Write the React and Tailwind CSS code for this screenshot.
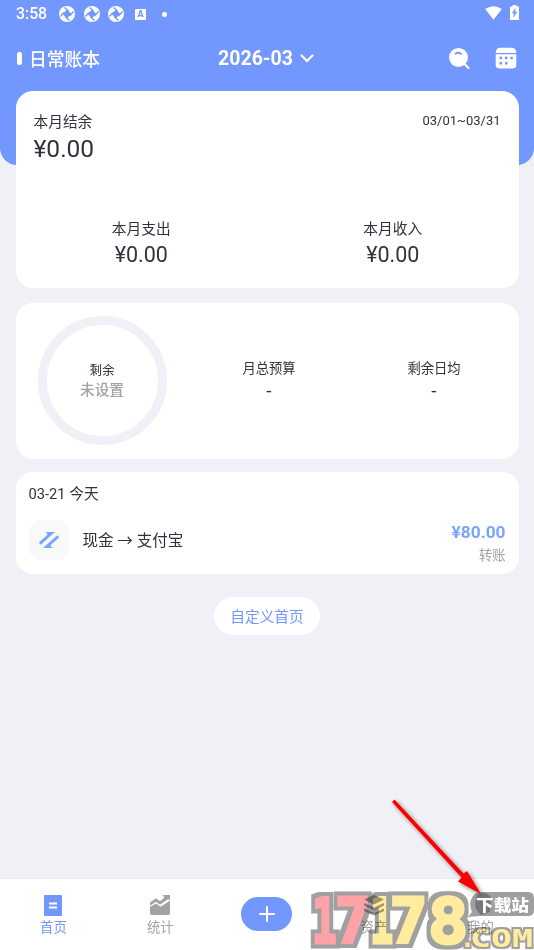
import React from "react";

function Shutter() {
  return (
    <svg width="16" height="16" viewBox="0 0 16 16">
      <circle cx="8" cy="8" r="8" fill="#fff" />
      <path d="M8 4.200 11.800 8 8 11.800 4.200 8z" fill="#7298ff" stroke="#7298ff" strokeWidth="1" strokeLinejoin="round" />
      <path d="M10 5.500 5.500 1.500M10.500 10 14.500 5.500M6 10.500 10.500 14.500M5.500 6 1.500 10.500" stroke="#7298ff" strokeWidth="1.300" />
    </svg>
  );
}

function StatusBar() {
  return (
    <div className="flex h-7 items-center pl-4 pr-4 text-white">
      <span className="w-[43px] text-[15.800px] font-medium leading-7 whitespace-nowrap">3:58</span>
      <div className="flex items-center gap-[8.500px]">
        <Shutter />
        <Shutter />
        <Shutter />
      </div>
      <span className="ml-[11px] flex h-[11px] w-[11px] items-center justify-center rounded-[1px] bg-white text-[9px] leading-none font-black text-[#7298ff]">A</span>
      <span className="ml-[16px] h-[5px] w-[5px] rounded-full bg-white" />
      <svg className="mb-[2px] ml-auto" width="17" height="14" viewBox="0 0 17 14">
        <path d="M.2 3Q8.500-2.500 16.800 3L8.500 13.800z" fill="#fff" />
      </svg>
      <svg className="-mr-px mb-[3px] ml-[8px]" width="9" height="15" viewBox="0 0 9 15">
        <path d="M2.500 0h4v1.500H9V15H0V1.500h2.500z" fill="#fff" />
        <path d="M5.300 3.500 2.300 8h1.900l-.6 4.200L6.900 7H4.800z" fill="#7298ff" stroke="#7298ff" strokeWidth=".5" />
      </svg>
    </div>
  );
}

function TitleBar() {
  return (
    <div className="grid h-[60px] grid-cols-[1fr_auto_1fr] items-center px-[17px] text-white">
      <div className="flex items-center pt-px">
        <span className="h-[13px] w-[5px] rounded-[2px] bg-white" />
        <span className="ml-[7px] pt-[2px] text-[17.800px] leading-6 font-medium">日常账本</span>
      </div>
      <div className="flex items-center gap-[7px] pr-[2px] pt-[2px]">
        <span className="text-[19.500px] leading-6 font-bold">2026-03</span>
        <svg width="14" height="10" viewBox="0 0 14 10" fill="none" stroke="#fff" strokeWidth="2.200" strokeLinecap="round">
          <path d="m1.500 1.500 5.500 5.500 5.500-5.500" />
        </svg>
      </div>
      <div className="flex items-center justify-end gap-[25px]">
        <svg width="22" height="22" viewBox="0 0 22 22">
          <circle cx="10.500" cy="10.500" r="9.500" fill="#fff" />
          <path d="m16.500 17 4 4" stroke="#fff" strokeWidth="2" strokeLinecap="round" />
          <path d="M7.500 6.800q2.800-2.200 5.600 0" fill="none" stroke="#7298ff" strokeWidth="1.800" strokeLinecap="round" />
        </svg>
        <svg width="22" height="22" viewBox="0 0 22 22">
          <path d="M.7 6V5.500Q1.200.8 5 .8h12q3.800 0 4.300 4.700V6zM.7 7.300h20.600v10.500q0 3.800-3.800 3.800h-13Q.7 21.600.7 17.800z" fill="#fff" />
          <g fill="#7298ff">
            <rect x="4.500" y="9.700" width="2.500" height="2.500" />
            <rect x="10" y="9.700" width="2.500" height="2.500" />
            <rect x="15.300" y="9.700" width="2.500" height="2.500" />
            <rect x="4.500" y="15" width="2.500" height="2.500" />
            <rect x="10" y="15" width="2.500" height="2.500" />
          </g>
        </svg>
      </div>
    </div>
  );
}

function Summary({ label }) {
  return (
    <div className="flex flex-col items-center">
      <span className="text-[14.700px] leading-5">{label}</span>
      <span className="mt-[2px] text-[21.500px] leading-7">¥0.00</span>
    </div>
  );
}

function Budget({ label }) {
  return (
    <div className="flex flex-col items-center">
      <span className="text-[13.300px] leading-5">{label}</span>
      <span className="text-[19px] leading-6">-</span>
    </div>
  );
}

function Tab({ label, active, children }) {
  return (
    <div className={"flex flex-col items-center " + (active ? "text-[#7298ff]" : "text-[#a3a3a3]")}>
      <div className="mt-[15px] flex h-[22px] items-center">{children}</div>
      <span className="mt-[2px] text-[13.300px] leading-5">{label}</span>
    </div>
  );
}

function BottomNav() {
  return (
    <nav className="grid h-[72px] grid-cols-5 border-t border-[#e9eaee] bg-white">
      <Tab label="首页" active>
        <svg width="18" height="21" viewBox="0 0 18 21">
          <rect width="18" height="21" rx="1" fill="#7298ff" />
          <path d="M5 8.500h8M5 12.500h8" stroke="#fff" strokeWidth="1.800" />
        </svg>
      </Tab>
      <Tab label="统计">
        <svg width="22" height="22" viewBox="0 0 22 22" fill="#a3a3a3">
          <path d="m1 8.500 6-4.200 4 3 4.500-3.800L13.500 1H21v5l-2-.8-8 5.500-4-3-6 4z" />
          <path d="m1 13 6-3.500 4.500 3.200L21 6.500V19q0 2-2 2H3q-2 0-2-2z" />
        </svg>
      </Tab>
      <div className="flex justify-center">
        <div className="mt-[18px] flex h-[34px] w-[51px] items-center justify-center rounded-full bg-[#7298ff]">
          <svg width="16" height="16" viewBox="0 0 16 16" stroke="#fff" strokeWidth="2" strokeLinecap="round">
            <path d="M8 1v14M1 8h14" />
          </svg>
        </div>
      </div>
      <Tab label="资产">
        <svg width="22" height="22" viewBox="0 0 22 22" fill="#a3a3a3">
          <path d="m11 1 10 4.500-10 5-10-5zM1 9l10 4.500L21 9v2.500l-10 5-10-5zM1 14.500 11 19l10-4.500V17l-10 4.500L1 17z" />
        </svg>
      </Tab>
      <Tab label="我的">
        <svg width="22" height="22" viewBox="0 0 22 22" fill="#a3a3a3">
          <circle cx="11" cy="10" r="10" />
          <path d="M7 11q4 5 8 0" fill="none" stroke="#fff" strokeWidth="2" />
        </svg>
      </Tab>
    </nav>
  );
}

const DIGITS = [
  ["1", 312, 0.64, "#ffa3a8"],
  ["7", 335, 0.92, "#ffa3a8"],
  ["1", 370, 0.6, "#ffec9e"],
  ["7", 389.5, 0.98, "#ffec9e"],
  ["8", 428, 1.04, "#ffec9e"],
];

function Outline({ id, radius }) {
  return (
    <filter id={id} filterUnits="userSpaceOnUse" x="300" y="870" width="234" height="80" colorInterpolationFilters="sRGB">
      <feMorphology in="SourceAlpha" operator="dilate" radius={radius} result="fat" />
      <feFlood floodColor="#a0a0a0" />
      <feComposite in2="fat" operator="in" result="edge" />
      <feMerge>
        <feMergeNode in="edge" />
        <feMergeNode in="SourceGraphic" />
      </feMerge>
    </filter>
  );
}

function WatermarkDigits() {
  return (
    <svg width="534" height="80" viewBox="0 870 534 80" shapeRendering="crispEdges">
      <defs>
        <Outline id="outline" radius="4" />
        <Outline id="thinOutline" radius="2" />
      </defs>
      <g filter="url(#outline)" fontFamily="'DejaVu Sans Mono', 'Liberation Mono', monospace" fontWeight="700" fontSize="62" strokeWidth="3" strokeLinejoin="miter">
        {DIGITS.map(([ch, x, sx, fill]) => (
          <text key={x} x="0" y="0" fill={fill} stroke={fill} transform={`translate(${x} 942.500) scale(${sx * 1.04} 1)`}>{ch}</text>
        ))}
      </g>
      <g filter="url(#thinOutline)" fontFamily="'DejaVu Sans Mono', 'Liberation Mono', monospace" fontWeight="700" fontSize="25" fill="#ffec9e">
        <text x="460" y="947">.</text>
        <text x="470" y="947" textLength="63" lengthAdjust="spacingAndGlyphs">COM</text>
      </g>
    </svg>
  );
}

function WatermarkBadge() {
  return (
    <svg width="534" height="160" viewBox="0 790 534 160">
      <defs>
        <filter id="arrowShadow" x="-20%" y="-20%" width="140%" height="140%">
          <feDropShadow dx="2" dy="2" stdDeviation="2" floodColor="#000" floodOpacity=".5" />
        </filter>
      </defs>
      <path d="M480 892h48q6 0 6 6v12q0 6-6 6h-49l-11 1 4-5q-4-10 1-16 3-4 7-4z" fill="#a09fa0" />
      <path d="M477 895q8-5 14 2l-1 15-9 3q-9-7-4-20z" fill="#777" />
      <text x="476" y="911" textLength="53" lengthAdjust="spacingAndGlyphs" fontFamily="'Noto Sans CJK SC', sans-serif" fontWeight="900" fontSize="16" fill="#fff">下载站</text>
      <g filter="url(#arrowShadow)" fill="#f80603">
        <path d="m392 802 2.500-2.500 69 74 3.500-2.500 14 23-23-12.500 3.500-4z" />
      </g>
    </svg>
  );
}

export default function App() {
  return (
    <div className="relative flex h-[950px] w-[534px] flex-col overflow-hidden bg-[#f0f1f6] font-[Roboto,'Noto_Sans_CJK_SC',sans-serif] text-[#30323e]">
      <header className="h-[165px] shrink-0 rounded-b-[17px] bg-[#7298ff]">
        <StatusBar />
        <TitleBar />
      </header>

      <main className="z-10 -mt-[74px] flex flex-1 flex-col px-[15.500px]">
        <section className="h-[197px] rounded-[17px] bg-white pt-[21px]">
          <div className="flex items-start justify-between px-[18px]">
            <div className="flex flex-col">
              <span className="text-[14.700px] leading-5">本月结余</span>
              <span className="mt-[2px] text-[24.500px] leading-[30px]">¥0.00</span>
            </div>
            <span className="text-[13px] leading-[18px]">03/01~03/31</span>
          </div>
          <div className="mt-[55px] grid grid-cols-2">
            <Summary label="本月支出" />
            <Summary label="本月收入" />
          </div>
        </section>

        <section className="mt-[15px] flex h-[156px] items-center rounded-[17px] bg-white">
          <div className="-mt-px ml-[22px] flex h-[129px] w-[129px] shrink-0 flex-col items-center justify-center rounded-full border-[9px] border-[#f0f1f6] pt-[1px]">
            <span className="text-[12.500px] leading-[18px]">剩余</span>
            <span className="text-[14.700px] leading-5 font-medium text-[#a3a3a3]">未设置</span>
          </div>
          <div className="-mt-px ml-[20px] mr-[2px] grid flex-1 grid-cols-2">
            <Budget label="月总预算" />
            <Budget label="剩余日均" />
          </div>
        </section>

        <section className="mt-[13px] h-[102px] rounded-[17px] bg-white px-[13px] pt-[12px]">
          <div className="text-[14.700px] leading-5">03-21 今天</div>
          <div className="mt-[16px] flex h-10 items-center">
            <div className="flex h-10 w-10 items-center justify-center rounded-[12px] bg-[#f9f9fa]">
              <svg width="20" height="18" viewBox="0 0 20 18" fill="#7aa5ff">
                <path d="M5.500 1H16L2 13.500Q.3 14 .3 11L8 4.200Q9.500 2.500 5.500 1zM14.500 17H4L18 4.500Q19.700 4 19.700 7L12 13.800Q10.500 15.500 14.500 17z" />
              </svg>
            </div>
            <span className="ml-[14px] pt-[2px] text-[15.500px] leading-6 whitespace-nowrap">现金 → 支付宝</span>
            <div className="ml-auto flex flex-col items-end pt-[6px]">
              <span className="text-[17.300px] leading-6 font-bold text-[#7aa5ff]">¥80.00</span>
              <span className="mt-[2px] text-[13.300px] leading-5 text-[#a3a3a3]">转账</span>
            </div>
          </div>
        </section>

        <button className="mt-[23px] h-[38px] w-[106px] self-center rounded-full bg-white pt-[2px] text-[14.700px] text-[#7298ff]">自定义首页</button>
      </main>

      <BottomNav />
      <div className="pointer-events-none absolute bottom-0 left-0 z-20 h-[80px] w-[534px] mix-blend-multiply">
        <WatermarkDigits />
      </div>
      <div className="pointer-events-none absolute bottom-0 left-0 z-30 h-[160px] w-[534px]">
        <WatermarkBadge />
      </div>
    </div>
  );
}
